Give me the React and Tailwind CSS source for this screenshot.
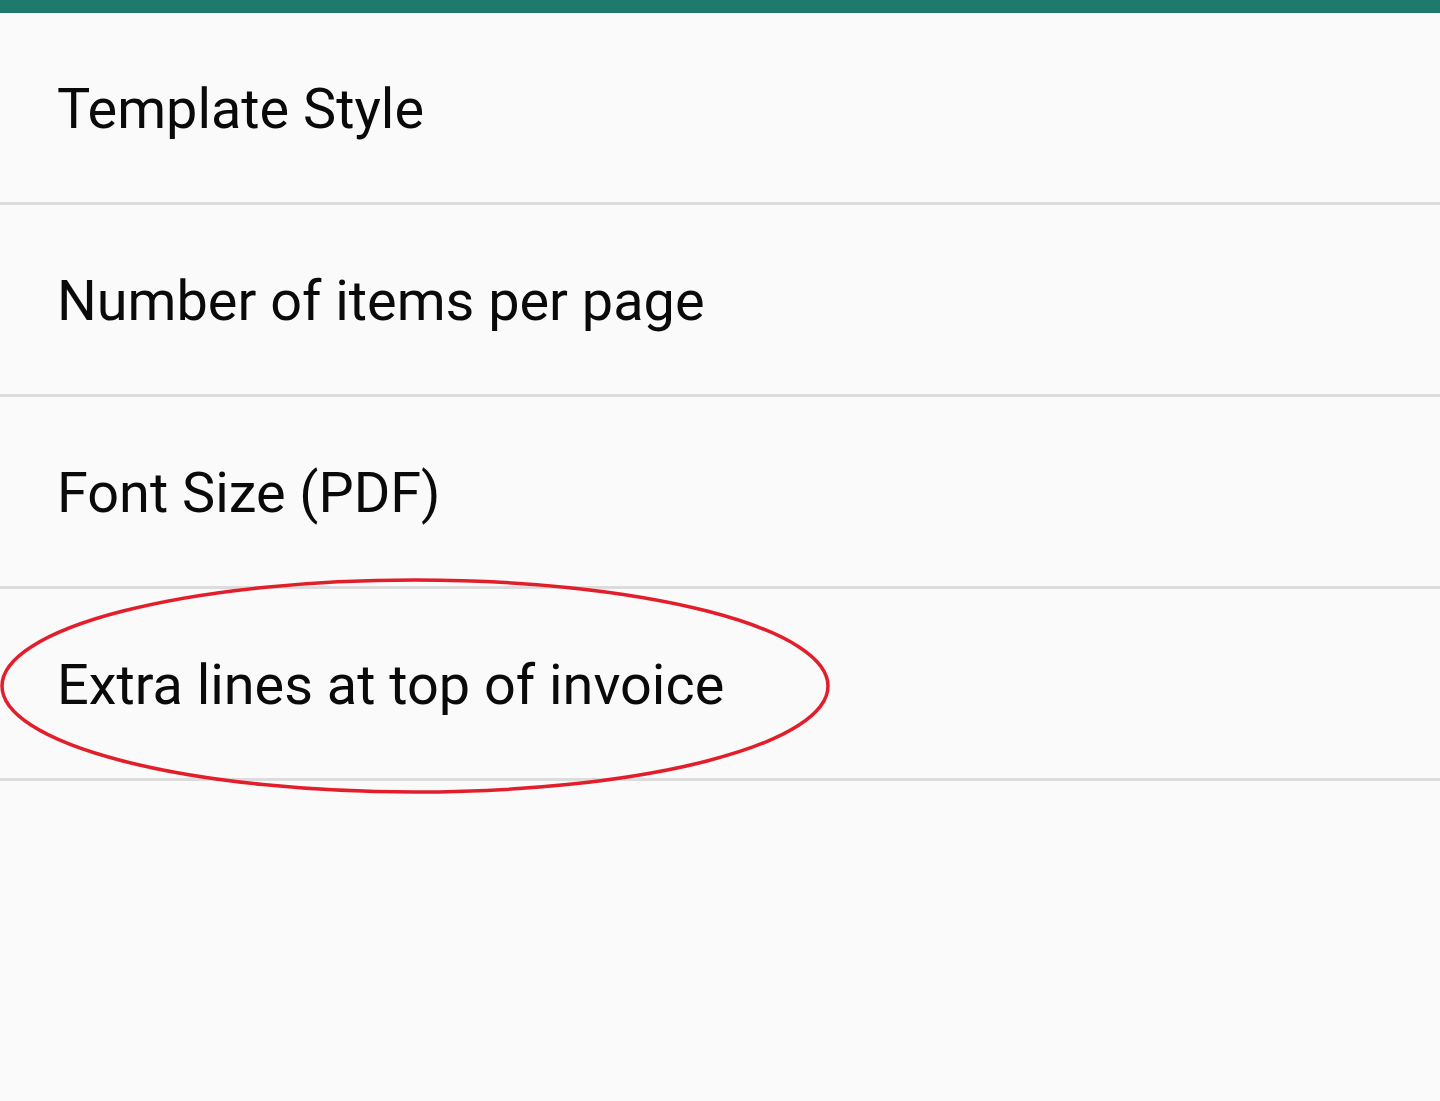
const items = [
  'Template Style',
  'Number of items per page',
  'Font Size (PDF)',
  'Extra lines at top of invoice',
]

export default function App() {
  return (
    <div className="relative min-h-[1101px] w-full bg-[#fafafa]" style={{ fontFamily: 'Roboto, "Noto Sans", sans-serif' }}>
      <div className="h-[13px] bg-[#1e7a6d]" />
      <ul>
        {items.map((label) => (
          <li key={label} className="flex h-[192px] items-center border-b-[3px] border-[#dcdcdc] pl-[57px] pt-[4px]">
            <span className="text-[55.8px] leading-none text-[#0a0a0a]">{label}</span>
          </li>
        ))}
      </ul>
      <svg className="pointer-events-none absolute left-0 top-[578px]" width="834" height="220" viewBox="0 0 834 220">
        <ellipse cx="415" cy="108" rx="413" ry="106" fill="none" stroke="#e31e2b" strokeWidth="3.5" />
      </svg>
    </div>
  )
}
